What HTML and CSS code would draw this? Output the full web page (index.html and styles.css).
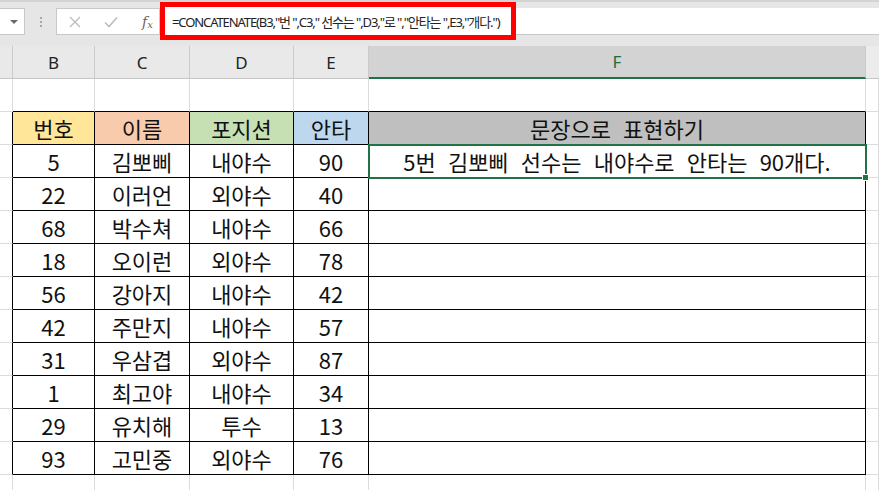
FILE: index.html
```html
<!DOCTYPE html>
<html lang="ko">
<head>
<meta charset="utf-8">
<link rel="stylesheet" href="styles.css">
</head>
<body>
<div class="toolbar">
  <div class="namebox"><span class="arrow"></span></div>
  <div class="grip"><i></i><i></i><i></i></div>
  <div class="iconbox">
    <svg class="ico" width="12" height="12" viewBox="0 0 12 12"><path d="M1 1L11 11M11 1L1 11" stroke="#bdbdbd" stroke-width="1.4" fill="none"/></svg>
    <svg class="ico" width="14" height="12" viewBox="0 0 14 12"><path d="M1 6.5L5 10.5L13 1.5" stroke="#bdbdbd" stroke-width="1.6" fill="none"/></svg>
    <span class="fx">f<sub>x</sub></span>
  </div>
  <div class="field">
    <span class="formula">=CONCATENATE(B3,"번 ",C3," 선수는 ",D3,"로 ","안타는 ",E3,"개다.")</span>
  </div>
</div>
<div class="sheet">
  <div class="c ch"></div><div class="c ch">B</div><div class="c ch">C</div><div class="c ch">D</div><div class="c ch">E</div><div class="c ch sel">F</div><div class="c ch g"></div>

  <div class="c"></div><div class="c ab"></div><div class="c ab"></div><div class="c ab"></div><div class="c ab"></div><div class="c ab"></div><div class="c"></div>

  <div class="c edge"></div><div class="c t y">번호</div><div class="c t o">이름</div><div class="c t gr">포지션</div><div class="c t b">안타</div><div class="c t gy wide">문장으로 표현하기</div><div class="c"></div>

  <div class="c edge"></div><div class="c t">5</div><div class="c t">김뽀삐</div><div class="c t">내야수</div><div class="c t">90</div><div class="c t active wide">5번 김뽀삐 선수는 내야수로 안타는 90개다.</div><div class="c"></div>
  <div class="c edge"></div><div class="c t">22</div><div class="c t">이러언</div><div class="c t">외야수</div><div class="c t">40</div><div class="c t"></div><div class="c"></div>
  <div class="c edge"></div><div class="c t">68</div><div class="c t">박수쳐</div><div class="c t">내야수</div><div class="c t">66</div><div class="c t"></div><div class="c"></div>
  <div class="c edge"></div><div class="c t">18</div><div class="c t">오이런</div><div class="c t">외야수</div><div class="c t">78</div><div class="c t"></div><div class="c"></div>
  <div class="c edge"></div><div class="c t">56</div><div class="c t">강아지</div><div class="c t">내야수</div><div class="c t">42</div><div class="c t"></div><div class="c"></div>
  <div class="c edge"></div><div class="c t">42</div><div class="c t">주만지</div><div class="c t">내야수</div><div class="c t">57</div><div class="c t"></div><div class="c"></div>
  <div class="c edge"></div><div class="c t">31</div><div class="c t">우삼겹</div><div class="c t">외야수</div><div class="c t">87</div><div class="c t"></div><div class="c"></div>
  <div class="c edge"></div><div class="c t">1</div><div class="c t">최고야</div><div class="c t">내야수</div><div class="c t">34</div><div class="c t"></div><div class="c"></div>
  <div class="c edge"></div><div class="c t">29</div><div class="c t">유치해</div><div class="c t">투수</div><div class="c t">13</div><div class="c t"></div><div class="c"></div>
  <div class="c edge"></div><div class="c t">93</div><div class="c t">고민중</div><div class="c t">외야수</div><div class="c t">76</div><div class="c t"></div><div class="c"></div>

  <div class="c"></div><div class="c"></div><div class="c"></div><div class="c"></div><div class="c"></div><div class="c"></div><div class="c"></div>
</div>
</body>
</html>
```
FILE: styles.css
```css
html, body {
  margin: 0;
  padding: 0;
  background: #ffffff;
  overflow: hidden;
  width: 879px;
  height: 490px;
  font-family: "Noto Sans CJK KR", "Noto Sans", sans-serif;
}

.toolbar {
  height: 46px;
  box-sizing: border-box;
  background: #e6e6e6;
  border-top: 2px solid #d4d4d4;
  display: flex;
  align-items: flex-start;
  padding-top: 6px;
}

.namebox {
  width: 25px;
  height: 27px;
  box-sizing: border-box;
  background: #ffffff;
  border: 1px solid #c8c8c8;
  border-left: none;
  display: flex;
  align-items: center;
  justify-content: center;
}

.arrow {
  width: 0;
  height: 0;
  border-left: 4px solid transparent;
  border-right: 4px solid transparent;
  border-top: 4px solid #6b6b6b;
  margin-left: 4px;
}

.grip {
  width: 31px;
  height: 27px;
  display: flex;
  flex-direction: column;
  align-items: center;
  justify-content: center;
  gap: 2px;
}

.grip i {
  width: 2px;
  height: 2px;
  background: #a8a8a8;
}

.iconbox {
  width: 104px;
  height: 27px;
  box-sizing: border-box;
  background: #ffffff;
  border: 1px solid #c8c8c8;
  display: flex;
  align-items: center;
  padding-left: 12px;
  gap: 23px;
}

.fx {
  font-family: "DejaVu Serif", "Liberation Serif", serif;
  font-style: italic;
  font-size: 14px;
  color: #666666;
  margin-left: 1px;
}

.fx sub {
  font-size: 10px;
  vertical-align: -1px;
}

.field {
  flex: 1;
  height: 27px;
  box-sizing: border-box;
  background: #ffffff;
  border-bottom: 1px solid #c8c8c8;
  display: flex;
  align-items: center;
}

.formula {
  height: 38px;
  width: 356px;
  box-sizing: border-box;
  border: 5px solid #ff0000;
  background: #ffffff;
  display: flex;
  align-items: center;
  padding-left: 7px;
  font-family: "Noto Sans", "Noto Sans CJK KR", sans-serif;
  font-size: 13px;
  letter-spacing: -1.1px;
  color: #222222;
  white-space: nowrap;
  overflow: hidden;
}

.sheet {
  display: grid;
  grid-template-columns: 13px 82px 95px 104px 75px 497px 13px;
  grid-auto-rows: 33px;
}

.c {
  box-sizing: border-box;
  border-right: 1px solid #dcdcdc;
  border-bottom: 1px solid #dcdcdc;
  display: flex;
  align-items: center;
  justify-content: center;
  font-size: 22px;
  color: #111111;
  white-space: nowrap;
}

.ch {
  background: #e9e9e9;
  border-right-color: #cacaca;
  border-bottom-color: #c6c6c6;
  font-family: "Noto Sans", sans-serif;
  font-size: 17px;
  color: #222222;
}

.ch.sel {
  background: #d3d3d3;
  border-bottom: 2px solid #217346;
  color: #1e6b40;
}

.ch.g {
  background: #ececec;
  border-right: none;
}

.ab {
  border-bottom-color: #000000;
}

.edge {
  border-right-color: #000000;
}

.t {
  border-right-color: #000000;
  border-bottom-color: #000000;
}

.wide {
  word-spacing: 6px;
}

.y { background: #ffe699; }
.o { background: #f8cbad; }
.gr { background: #c6e0b4; }
.b { background: #bdd7ee; }
.gy { background: #bfbfbf; }

.active {
  position: relative;
  outline: 2px solid #217346;
  outline-offset: -1px;
}

.active::after {
  content: "";
  position: absolute;
  right: -4px;
  bottom: -4px;
  width: 5px;
  height: 5px;
  background: #217346;
  border: 1px solid #ffffff;
}
```
